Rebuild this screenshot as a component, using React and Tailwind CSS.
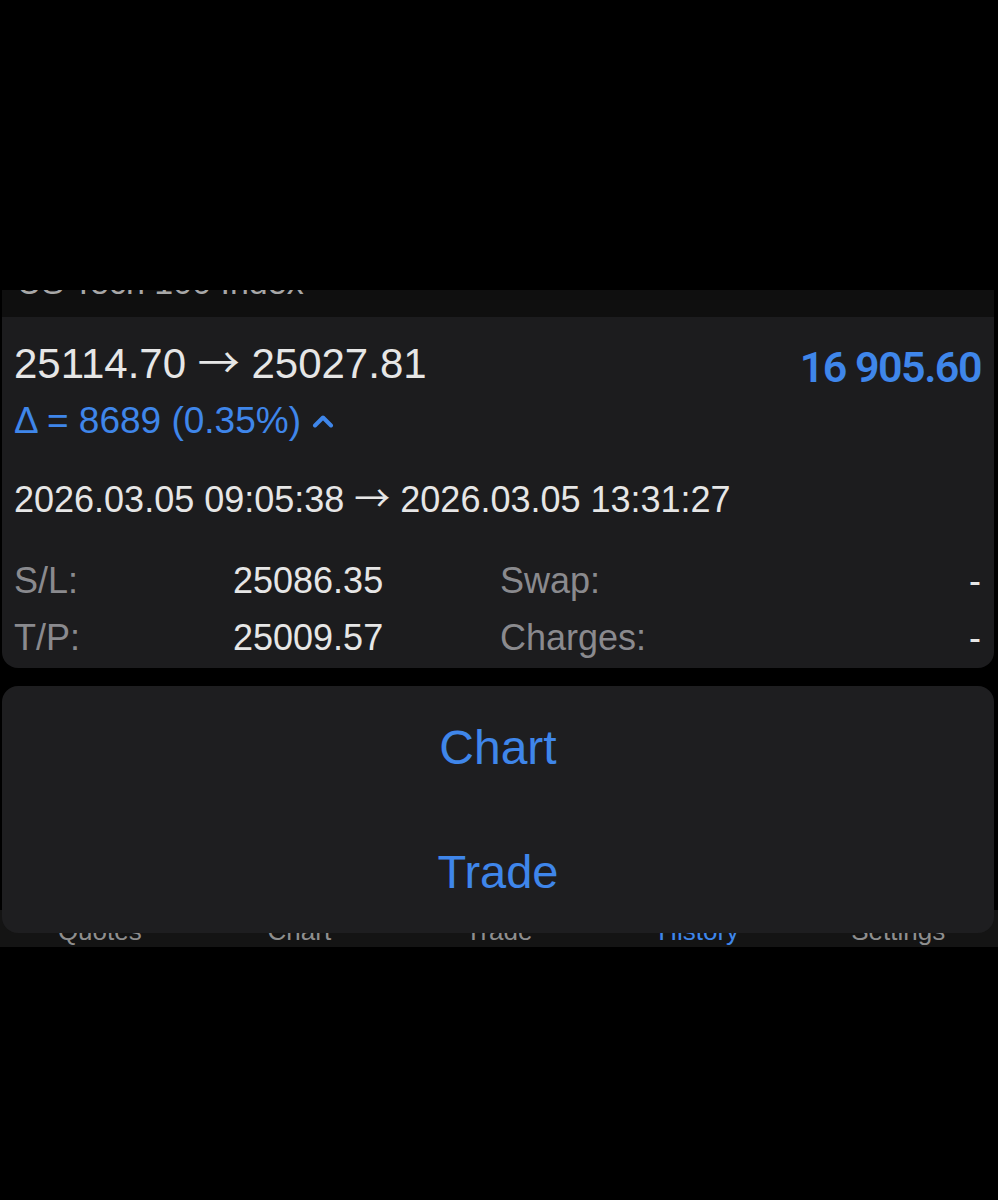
import { useState } from "react";

// Deal detail card from the History tab, with the action sheet open on top.

const ROWS = [
  { label: "S/L:", value: "25086.35", label2: "Swap:", value2: "-" },
  { label: "T/P:", value: "25009.57", label2: "Charges:", value2: "-" },
];

const TABS = ["Quotes", "Chart", "Trade", "History", "Settings"];

// long thin arrow like the iOS one; leading-[0] keeps the CJK font from growing the line
function Arrow() {
  return <span className="font-['Noto_Sans_CJK_SC',sans-serif] leading-[0]">→</span>;
}

function ChevronUp() {
  return (
    <svg width="22" height="14" viewBox="0 0 22 14" fill="none">
      <path d="M3 11.5 L11 3.5 L19 11.5" stroke="#3f86ea" strokeWidth="4" strokeLinecap="round" strokeLinejoin="round" />
    </svg>
  );
}

export default function App() {
  const [active] = useState("History");

  return (
    <div className="min-h-[1200px] w-full bg-black pt-[290px] font-['Liberation_Sans',Arial,sans-serif]">
      {/* symbol strip, scrolled so only the bottom of the text shows */}
      <div className="ml-[2px] mr-[4px] h-[27px] overflow-hidden bg-[#0f0f0f]">
        <div className="-mt-[25px] pl-[15px] text-[34px] leading-none text-[#a8a8a8]">US Tech 100 Index</div>
      </div>

      {/* ── DEAL CARD ── */}
      <div className="ml-[2px] mr-[4px] rounded-b-[16px] bg-[#1c1c1e] pl-[12px] pr-[13px] pt-[26px] pb-[12px]">
        <div className="flex h-[42px] items-start justify-between">
          <div className="text-[42px] leading-none text-[#e6e6e6]">25114.70 <Arrow /> 25027.81</div>
          <div className="mt-[3px] font-['Roboto',sans-serif] text-[43px] font-semibold leading-none tracking-[-1.5px] text-[#3f86ea]">16 905.60</div>
        </div>

        <div className="mt-[17px] flex items-center gap-[11px] text-[37px] leading-none text-[#3f86ea]">
          <span>Δ = 8689 (0.35%)</span>
          <ChevronUp />
        </div>

        <div className="mt-[43px] text-[36px] leading-none text-[#e6e6e6]">
          2026.03.05 09:05:38 <Arrow /> 2026.03.05 13:31:27
        </div>

        <div className="mt-[45px] grid grid-cols-[219px_267px_1fr_auto] gap-y-[21px] text-[36px] leading-none">
          {ROWS.map(r => (
            <div key={r.label} className="contents">
              <span className="text-[#8a8a8e]">{r.label}</span>
              <span className="text-[#e6e6e6]">{r.value}</span>
              <span className="text-[#8a8a8e]">{r.label2}</span>
              <span className="text-[#e6e6e6]">{r.value2}</span>
            </div>
          ))}
        </div>
      </div>

      {/* ── TAB BAR + ACTION SHEET ── */}
      <div className="relative mt-[2px] h-[277px]">
        <div className="absolute bottom-0 left-0 right-0 h-[37px] bg-[#141414]">
          <div className="grid grid-cols-5 pt-[8px] text-[26px] leading-none">
            {TABS.map(t => (
              <span key={t} className={`text-center ${t === active ? "text-[#3f86ea]" : "text-[#8e8e8e]"}`}>{t}</span>
            ))}
          </div>
        </div>

        {/* action sheet sits over the tab bar */}
        <div className="absolute left-[2px] right-[4px] top-[16px] z-10 flex h-[247px] flex-col rounded-[16px] bg-[#1e1e20]">
          <button className="flex h-[123.5px] items-center justify-center text-[48px] leading-none text-[#3f86ea]">Chart</button>
          <button className="flex h-[123.5px] items-center justify-center text-[47px] leading-none text-[#3f86ea]">Trade</button>
        </div>
      </div>
    </div>
  );
}
